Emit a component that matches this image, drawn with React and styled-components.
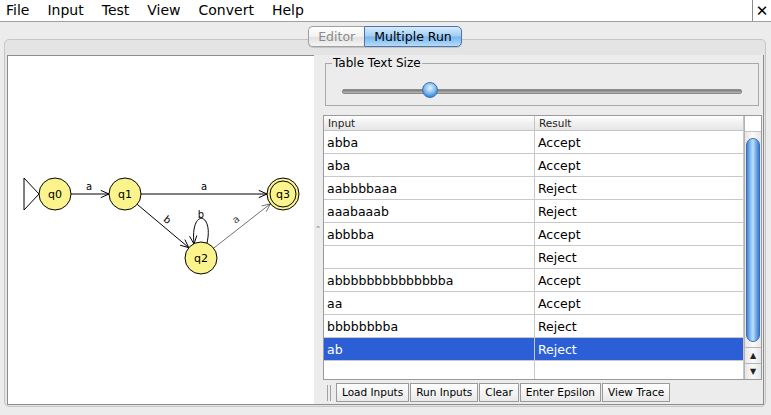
import React from 'react'
import styled, { createGlobalStyle } from 'styled-components'

const Global = createGlobalStyle`
  html, body { margin: 0; padding: 0; }
  body { font-family: "DejaVu Sans", "Liberation Sans", sans-serif; background: #ececec; }
`

const Window = styled.div`
  width: 771px;
  height: 415px;
  overflow: hidden;
  display: flex;
  flex-direction: column;
  background: #ececec;
  color: #000;
`

const MenuBar = styled.div`
  height: 21px;
  flex-shrink: 0;
  display: flex;
  align-items: center;
  background: #fff;
  border-bottom: 1px solid #a0a0a0;
  padding-left: 6px;
  gap: 18px;
`

const MenuItem = styled.span`
  font-size: 14px;
  line-height: 21px;
`

const CloseBox = styled.div`
  margin-left: auto;
  width: 18px;
  height: 21px;
  border-left: 1px solid #8a8a8a;
  display: flex;
  align-items: center;
  justify-content: center;
  font-size: 15px;
  font-weight: bold;
`

const Main = styled.div`
  flex: 1;
  display: flex;
  flex-direction: column;
  padding: 4px 5px 8px 4px;
  min-height: 0;
`

const TabStrip = styled.div`
  display: flex;
  justify-content: center;
  height: 21px;
  margin-bottom: -8px;
  position: relative;
  z-index: 1;
`

const Tab = styled.div`
  height: 19px;
  display: flex;
  align-items: center;
  padding: 0 9px;
  font-size: 12.5px;
  color: ${p => (p.$active ? '#000' : '#8a8a8a')};
  border: 1px solid ${p => (p.$active ? '#4f73a8' : '#a0a0a0')};
  border-radius: ${p => (p.$first ? '5px 0 0 5px' : '0 5px 5px 0')};
  ${p => (p.$first ? 'border-right: none;' : '')}
  background: ${p =>
    p.$active
      ? 'linear-gradient(#d6ebfc 0%, #a4cff5 45%, #7cb8ef 55%, #b4dcf9 100%)'
      : 'linear-gradient(#ffffff 0%, #f1f1f1 50%, #e2e2e2 55%, #f4f4f4 100%)'};
  box-shadow: 0 1px 1px rgba(0, 0, 0, 0.15);
`

const TabPane = styled.div`
  flex: 1;
  display: flex;
  border: 1px solid #c6c6c6;
  border-radius: 5px;
  background: #e4e4e4;
  padding: 15px 1px 1px 2px;
  min-height: 0;
`

const SplitArea = styled.div`
  flex: 1;
  display: flex;
  border-left: 1px solid #8c8c8c;
  border-right: 1px solid #8c8c8c;
  border-bottom: 1px solid #8c8c8c;
  background: #ececec;
  min-height: 0;
`

const Canvas = styled.div`
  width: 306px;
  border-top: 1px solid #8c8c8c;
  background: #fff;
  flex-shrink: 0;
`

const Splitter = styled.div`
  width: 8px;
  flex-shrink: 0;
  display: flex;
  align-items: center;
  justify-content: center;
`

const Grip = styled.span`
  font-size: 8px;
  color: #8a8a8a;
  line-height: 1;
`

const RightPanel = styled.div`
  flex: 1;
  display: flex;
  flex-direction: column;
  padding: 8px 1px 2px 1px;
  min-width: 0;
`

const GroupBox = styled.div`
  margin: 0 3px 0 2px;
  height: 43px;
  border: 1px solid #a8a8a8;
  box-sizing: border-box;
  display: flex;
  flex-direction: column;
`

const GroupTitle = styled.span`
  align-self: flex-start;
  font-size: 12px;
  line-height: 14px;
  margin: -8px 0 0 6px;
  padding: 0 1px;
  background: #ececec;
`

const TrackRow = styled.div`
  flex: 1;
  display: flex;
  align-items: center;
  padding: 8px 16px 0 16px;
`

const Track = styled.div`
  flex: 1;
  height: 3px;
  border-radius: 2px;
  background: linear-gradient(#7a7a7a, #b8b8b8);
  border: 1px solid #8a8a8a;
  position: relative;
`

const Thumb = styled.div`
  position: absolute;
  top: -8px;
  left: ${p => p.$pos}px;
  width: 16px;
  height: 16px;
  border-radius: 50%;
  border: 1px solid #3f6fb0;
  box-sizing: border-box;
  background: radial-gradient(circle at 50% 35%, #e6f3fd 0%, #93c6f2 40%, #3c8ae0 75%, #7ab6ef 100%);
`

const TableBox = styled.div`
  margin-top: 9px;
  height: 265px;
  border: 1px solid #9a9a9a;
  display: flex;
  background: #fff;
  box-sizing: border-box;
`

const TableMain = styled.div`
  flex: 1;
  display: flex;
  flex-direction: column;
  overflow: hidden;
`

const HeaderRow = styled.div`
  display: grid;
  grid-template-columns: 211px 1fr;
  height: 14px;
  border-bottom: 1px solid #c4c4c4;
  background: linear-gradient(#ffffff, #f0f0f0 50%, #e6e6e6);
  flex-shrink: 0;
`

const HeaderCell = styled.div`
  font-size: 10.5px;
  line-height: 14px;
  padding-left: 4px;
  border-right: 1px solid #c4c4c4;
  color: #222;
`

const Row = styled.div`
  display: grid;
  grid-template-columns: 211px 1fr;
  height: 22px;
  border-bottom: 1px solid #c8c8c8;
  background: ${p => (p.$selected ? '#2c5fd6' : '#fff')};
  color: ${p => (p.$selected ? '#fff' : '#000')};
  flex-shrink: 0;
`

const Cell = styled.div`
  font-size: 12.5px;
  line-height: 23px;
  padding-left: 3px;
  border-right: 1px solid #c8c8c8;
  white-space: nowrap;
`

const ScrollBar = styled.div`
  width: 16px;
  border-left: 1px solid #b4b4b4;
  display: flex;
  flex-direction: column;
  background: linear-gradient(90deg, #e6e6e6, #fafafa 50%, #e6e6e6);
`

const ScrollCorner = styled.div`
  height: 15px;
  background: #fff;
  border-bottom: 1px solid #c4c4c4;
`

const ScrollTrack = styled.div`
  flex: 1;
  padding: 6px 1px 5px 1px;
  display: flex;
  flex-direction: column;
`

const ScrollThumb = styled.div`
  height: 202px;
  border-radius: 7px;
  border: 1px solid #3d6db0;
  background: linear-gradient(90deg, #3f84dc, #9ccaf5 35%, #bfe0fb 50%, #6fa9ec 75%, #3a7dd6);
`

const ArrowButton = styled.div`
  height: 15px;
  border-top: 1px solid #b4b4b4;
  display: flex;
  align-items: center;
  justify-content: center;
  font-size: 8px;
  color: #222;
`

const ToolBar = styled.div`
  display: flex;
  align-items: center;
  margin-top: 3px;
  padding-left: 4px;
  gap: 1px;
`

const ToolGrip = styled.div`
  width: 2px;
  height: 16px;
  border-left: 1px solid #a0a0a0;
  border-right: 1px solid #a0a0a0;
  margin-right: 4px;
`

const ToolButton = styled.div`
  height: 17px;
  padding: 0 5px;
  border: 1px solid #9a9a9a;
  background: linear-gradient(#ffffff, #f4f4f4 50%, #e9e9e9);
  font-size: 10.5px;
  line-height: 17px;
  white-space: nowrap;
`

const rows = [
  ['abba', 'Accept'],
  ['aba', 'Accept'],
  ['aabbbbaaa', 'Reject'],
  ['aaabaaab', 'Reject'],
  ['abbbba', 'Accept'],
  ['', 'Reject'],
  ['abbbbbbbbbbbbbba', 'Accept'],
  ['aa', 'Accept'],
  ['bbbbbbbba', 'Reject'],
  ['ab', 'Reject'],
  ['', ''],
]

const StateNode = ({ x, y, label, final }) => (
  <g>
    <circle cx={x} cy={y} r="16" fill="#fbf48c" stroke="#000" strokeWidth="1" />
    {final && <circle cx={x} cy={y} r="13" fill="none" stroke="#000" strokeWidth="1" />}
    <text x={x} y={y + 4} textAnchor="middle" fontSize="11" fontFamily="DejaVu Sans, sans-serif">{label}</text>
  </g>
)

const Head = ({ x, y, ang, color = '#000', w = 1 }) => {
  const l = 9
  const a1 = ang + Math.PI - 0.42
  const a2 = ang + Math.PI + 0.42
  return (
    <path
      d={`M ${x + l * Math.cos(a1)} ${y + l * Math.sin(a1)} L ${x} ${y} L ${x + l * Math.cos(a2)} ${y + l * Math.sin(a2)}`}
      fill="none"
      stroke={color}
      strokeWidth={w}
    />
  )
}

const Diagram = () => {
  const lbl = { fontSize: 10, fontFamily: 'DejaVu Sans, sans-serif', textAnchor: 'middle' }
  const a12 = Math.atan2(64, 76)
  const a23 = Math.atan2(-64, 82)
  return (
    <svg width="306" height="348" viewBox="8 56 306 348">
      <polygon points="24,178 24,210 39,194" fill="#fff" stroke="#000" strokeWidth="1" />
      <line x1="71" y1="194" x2="109" y2="194" stroke="#000" />
      <Head x={109} y={194} ang={0} />
      <text x="89" y="190" {...lbl}>a</text>

      <line x1="141" y1="194" x2="267" y2="194" stroke="#000" />
      <Head x={267} y={194} ang={0} />
      <text x="204" y="190" {...lbl}>a</text>

      <line x1="137.2" y1="204.3" x2="188.8" y2="247.7" stroke="#000" strokeWidth="1" />
      <Head x={188.8} y={247.7} ang={a12} />
      <text x="167" y="223" {...lbl} transform="rotate(38 167 220)">b</text>

      <path d="M 207 243 C 214 212, 190 208, 194 244" fill="none" stroke="#000" strokeWidth="1" />
      <Head x={194} y={244} ang={Math.PI / 2 - 0.1} />
      <text x="201" y="218" {...lbl}>b</text>

      <line x1="213.6" y1="248.2" x2="270.4" y2="203.8" stroke="#333" strokeWidth="0.7" />
      <Head x={270.4} y={203.8} ang={a23} color="#333" w={0.7} />
      <text x="238" y="222" {...lbl} fill="#444" transform="rotate(-38 238 222)">a</text>

      <StateNode x={55} y={194} label="q0" />
      <StateNode x={125} y={194} label="q1" />
      <StateNode x={201} y={258} label="q2" />
      <StateNode x={283} y={194} label="q3" final />
    </svg>
  )
}

export default function App() {
  return (
    <Window>
      <Global />
      <MenuBar>
        <MenuItem>File</MenuItem>
        <MenuItem>Input</MenuItem>
        <MenuItem>Test</MenuItem>
        <MenuItem>View</MenuItem>
        <MenuItem>Convert</MenuItem>
        <MenuItem>Help</MenuItem>
        <CloseBox>✕</CloseBox>
      </MenuBar>
      <Main>
        <TabStrip>
          <Tab $first>Editor</Tab>
          <Tab $active>Multiple Run</Tab>
        </TabStrip>
        <TabPane>
          <SplitArea>
            <Canvas>
              <Diagram />
            </Canvas>
            <Splitter>
              <Grip>⌃</Grip>
            </Splitter>
            <RightPanel>
              <GroupBox>
                <GroupTitle>Table Text Size</GroupTitle>
                <TrackRow>
                  <Track>
                    <Thumb $pos={79} />
                  </Track>
                </TrackRow>
              </GroupBox>
              <TableBox>
                <TableMain>
                  <HeaderRow>
                    <HeaderCell>Input</HeaderCell>
                    <HeaderCell>Result</HeaderCell>
                  </HeaderRow>
                  {rows.map(([input, result], i) => (
                    <Row key={i} $selected={i === 9}>
                      <Cell>{input}</Cell>
                      <Cell>{result}</Cell>
                    </Row>
                  ))}
                </TableMain>
                <ScrollBar>
                  <ScrollCorner />
                  <ScrollTrack>
                    <ScrollThumb />
                  </ScrollTrack>
                  <ArrowButton>▲</ArrowButton>
                  <ArrowButton>▼</ArrowButton>
                </ScrollBar>
              </TableBox>
              <ToolBar>
                <ToolGrip />
                <ToolButton>Load Inputs</ToolButton>
                <ToolButton>Run Inputs</ToolButton>
                <ToolButton>Clear</ToolButton>
                <ToolButton>Enter Epsilon</ToolButton>
                <ToolButton>View Trace</ToolButton>
              </ToolBar>
            </RightPanel>
          </SplitArea>
        </TabPane>
      </Main>
    </Window>
  )
}
